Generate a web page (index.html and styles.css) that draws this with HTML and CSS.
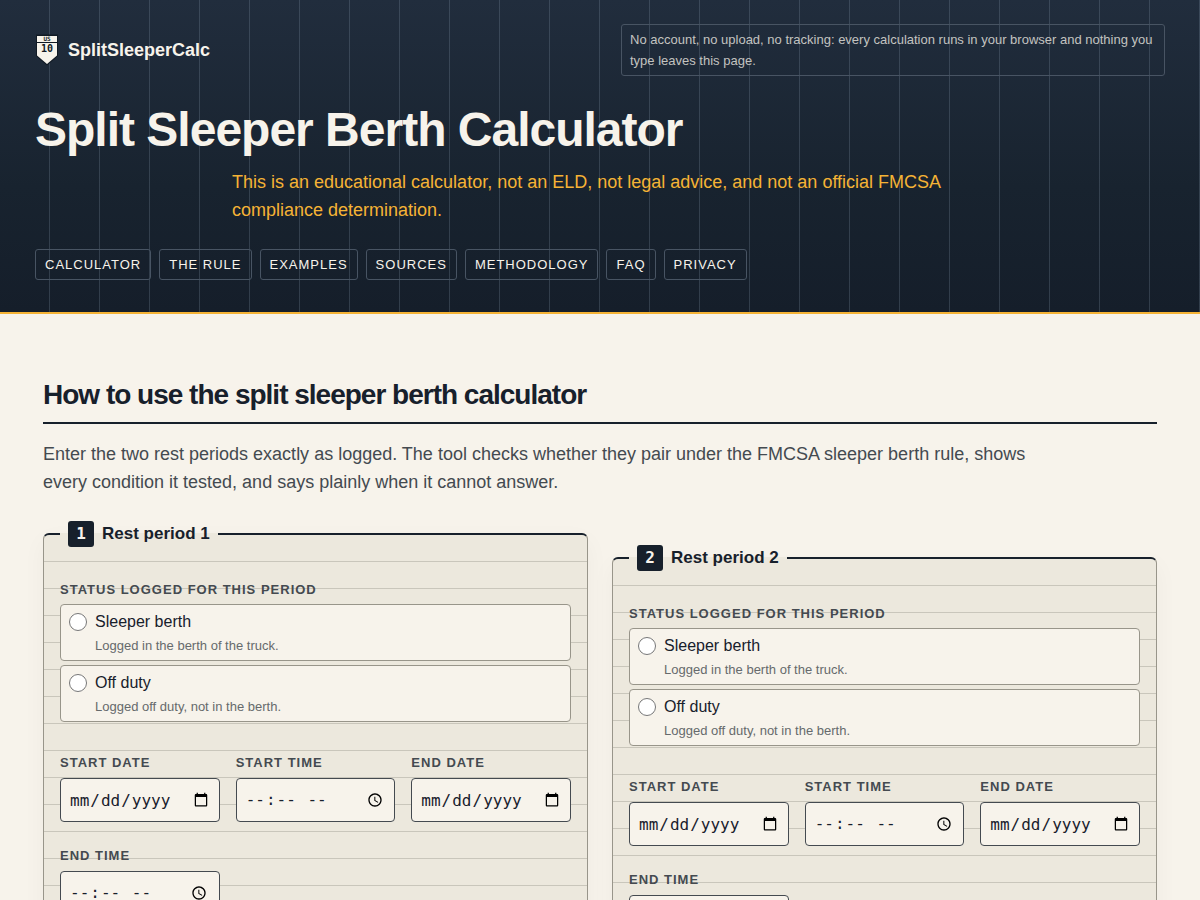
FILE: index.html
```html
<!DOCTYPE html>
<html lang="en">
<head>
    <meta charset="UTF-8">
    <meta name="viewport" content="width=device-width, initial-scale=1.0">
    <title>Split Sleeper Berth Calculator</title>
    <link rel="stylesheet" href="styles.css">
</head>
<body>
    <header class="site-header">
        <div class="header-top">
            <a class="brand" href="#">
                <svg class="brand-mark" width="24" height="32" viewBox="0 0 24 32" aria-hidden="true">
                    <path d="M1 0.5h22v21.5L12 31.5 1 22z" fill="#111a24"/>
                    <path d="M2 2h20v6H2z M2 9h20v12.5L12 30 2 21.5z" fill="#f7f3eb"/>
                    <text x="12" y="7" class="mark-us">US</text>
                    <text x="12" y="18" class="mark-num">10</text>
                </svg>
                <span>SplitSleeperCalc</span>
            </a>
            <p class="privacy-note">No account, no upload, no tracking: every calculation runs in your browser and nothing you type leaves this page.</p>
        </div>
        <h1>Split Sleeper Berth Calculator</h1>
        <p class="disclaimer">This is an educational calculator, not an ELD, not legal advice, and not an official FMCSA compliance determination.</p>
        <nav class="site-nav">
            <a href="#calculator">Calculator</a>
            <a href="#rule">The rule</a>
            <a href="#examples">Examples</a>
            <a href="#sources">Sources</a>
            <a href="#methodology">Methodology</a>
            <a href="#faq">FAQ</a>
            <a href="#privacy">Privacy</a>
        </nav>
    </header>

    <main id="calculator">
        <h2>How to use the split sleeper berth calculator</h2>
        <p class="intro">Enter the two rest periods exactly as logged. The tool checks whether they pair under the FMCSA sleeper berth rule, shows every condition it tested, and says plainly when it cannot answer.</p>

        <form class="periods">
            <fieldset class="period">
                <legend><span class="period-number">1</span>Rest period 1</legend>
                <div class="status" role="radiogroup" aria-labelledby="status-1">
                    <span class="field-label" id="status-1">Status logged for this period</span>
                    <label class="choice">
                        <input type="radio" name="status1" value="sleeper">
                        <span class="choice-text">Sleeper berth<small>Logged in the berth of the truck.</small></span>
                    </label>
                    <label class="choice">
                        <input type="radio" name="status1" value="off">
                        <span class="choice-text">Off duty<small>Logged off duty, not in the berth.</small></span>
                    </label>
                </div>
                <div class="times">
                    <div class="field">
                        <label class="field-label" for="start-date-1">Start date</label>
                        <input type="date" id="start-date-1">
                    </div>
                    <div class="field">
                        <label class="field-label" for="start-time-1">Start time</label>
                        <input type="time" id="start-time-1">
                    </div>
                    <div class="field">
                        <label class="field-label" for="end-date-1">End date</label>
                        <input type="date" id="end-date-1">
                    </div>
                    <div class="field">
                        <label class="field-label" for="end-time-1">End time</label>
                        <input type="time" id="end-time-1">
                    </div>
                </div>
            </fieldset>

            <fieldset class="period period-second">
                <legend><span class="period-number">2</span>Rest period 2</legend>
                <div class="status" role="radiogroup" aria-labelledby="status-2">
                    <span class="field-label" id="status-2">Status logged for this period</span>
                    <label class="choice">
                        <input type="radio" name="status2" value="sleeper">
                        <span class="choice-text">Sleeper berth<small>Logged in the berth of the truck.</small></span>
                    </label>
                    <label class="choice">
                        <input type="radio" name="status2" value="off">
                        <span class="choice-text">Off duty<small>Logged off duty, not in the berth.</small></span>
                    </label>
                </div>
                <div class="times">
                    <div class="field">
                        <label class="field-label" for="start-date-2">Start date</label>
                        <input type="date" id="start-date-2">
                    </div>
                    <div class="field">
                        <label class="field-label" for="start-time-2">Start time</label>
                        <input type="time" id="start-time-2">
                    </div>
                    <div class="field">
                        <label class="field-label" for="end-date-2">End date</label>
                        <input type="date" id="end-date-2">
                    </div>
                    <div class="field">
                        <label class="field-label" for="end-time-2">End time</label>
                        <input type="time" id="end-time-2">
                    </div>
                </div>
            </fieldset>
        </form>
    </main>
</body>
</html>
```
FILE: styles.css
```css
* {
    box-sizing: border-box;
}
body {
    margin: 0;
    font-family: "Liberation Sans", Arial, sans-serif;
    font-size: 16px;
    color: #17202b;
    background-color: #f7f3eb;
}
h1, h2, p {
    margin: 0;
}

/* header */
.site-header {
    padding: 24px 35px 32px;
    color: #f7f3eb;
    background:
        repeating-linear-gradient(90deg, transparent 0 49px, rgba(150, 170, 190, 0.22) 49px 50px),
        linear-gradient(#212d3d, #18232f 60%, #151e2a);
    border-bottom: 2px solid #f5b335;
}
.header-top {
    display: flex;
    justify-content: space-between;
    align-items: center;
    gap: 24px;
}
.brand {
    display: flex;
    align-items: center;
    gap: 9px;
    color: #f7f3eb;
    font-size: 18px;
    font-weight: bold;
    text-decoration: none;
}
.mark-us, .mark-num {
    font-family: "DejaVu Sans Mono", monospace;
    text-anchor: middle;
    fill: #111a24;
}
.mark-us {
    font-size: 6px;
}
.mark-num {
    font-size: 10px;
    font-weight: bold;
}
.privacy-note {
    max-width: 544px;
    padding: 4px 8px;
    font-size: 13px;
    line-height: 21px;
    color: #c3c3c0;
    border: 1px solid #485463;
    border-radius: 3px;
}
h1 {
    margin-top: 28px;
    font-size: 48px;
    line-height: 52px;
    letter-spacing: -1px;
}
.disclaimer {
    max-width: 736px;
    margin: 12px auto 0;
    font-size: 18px;
    line-height: 28px;
    color: #f5b335;
}
.site-nav {
    display: flex;
    flex-wrap: wrap;
    gap: 8px;
    margin-top: 25px;
}
.site-nav a {
    padding: 4px 9px;
    font-size: 13px;
    line-height: 21px;
    letter-spacing: 1px;
    text-transform: uppercase;
    text-decoration: none;
    color: #f7f3eb;
    border: 1px solid #485463;
    border-radius: 3px;
}

/* calculator */
main {
    padding: 64px 43px;
}
h2 {
    padding-bottom: 10px;
    font-size: 28px;
    line-height: 34px;
    letter-spacing: -1px;
    border-bottom: 2px solid #17202b;
}
.intro {
    max-width: 1000px;
    margin-top: 16px;
    font-size: 18px;
    line-height: 28px;
    color: #444a50;
}
.periods {
    display: grid;
    grid-template-columns: 1fr 1fr;
    align-items: start;
    gap: 24px;
    margin-top: 25px;
}
.period {
    min-width: 0;
    margin: 0;
    padding: 33px 16px;
    border: 1px solid #98958a;
    border-top: 2px solid #17202b;
    border-radius: 6px;
    background: repeating-linear-gradient(transparent 0 26px, #c9c6bb 26px 27px) #ece8dd;
    box-shadow: 0 8px 24px rgba(23, 32, 43, 0.04);
}
.period-second {
    margin-top: 24px;
}
legend {
    display: flex;
    align-items: center;
    gap: 8px;
    padding: 0 8px;
    font-size: 17px;
    font-weight: bold;
}
.period-number {
    width: 26px;
    font-family: "DejaVu Sans Mono", monospace;
    font-size: 16px;
    line-height: 26px;
    text-align: center;
    color: #f7f3eb;
    background-color: #17202b;
    border-radius: 3px;
}
.field-label {
    font-size: 13px;
    font-weight: bold;
    line-height: 20px;
    letter-spacing: 1px;
    text-transform: uppercase;
    color: #444a50;
}
.status {
    display: flex;
    flex-direction: column;
    gap: 4px;
}
.choice {
    display: flex;
    align-items: flex-start;
    gap: 8px;
    padding: 4px 8px;
    background-color: #f7f3eb;
    border: 1px solid #98958a;
    border-radius: 4px;
}
.choice input {
    width: 18px;
    height: 18px;
    margin: 4px 0 0;
}
.choice-text {
    line-height: 26px;
}
.choice small {
    display: block;
    font-size: 13px;
    line-height: 21px;
    color: #666a6c;
}
.times {
    display: grid;
    grid-template-columns: repeat(3, 1fr);
    gap: 24px 16px;
    margin-top: 31px;
}
.field {
    display: flex;
    flex-direction: column;
    gap: 5px;
    min-width: 0;
}
.field input {
    width: 100%;
    height: 44px;
    padding: 8px;
    font-family: "DejaVu Sans Mono", monospace;
    font-size: 16px;
    color: #17202b;
    background-color: #f7f3eb;
    border: 1px solid #444a50;
    border-radius: 4px;
}

@media (max-width: 800px) {
    .header-top {
        flex-wrap: wrap;
    }
    .periods {
        grid-template-columns: 1fr;
    }
    .period-second {
        margin-top: 0;
    }
}
```
